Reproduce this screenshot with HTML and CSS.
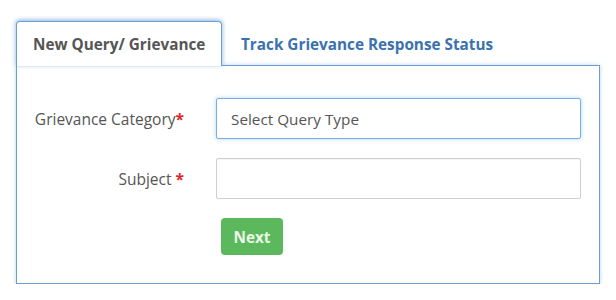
FILE: index.html
```html
<!DOCTYPE html>
<html lang="en">
<head>
  <meta charset="UTF-8">
  <meta name="viewport" content="width=device-width, initial-scale=1.0">
  <title> Grievance </title>
  <link rel="stylesheet" href="styles.css">
</head>
<body>
  <div class="container">
    <!-- Tabs -->
    <div class="tabs">
      <div class="tab active">New Query/ Grievance</div>
      <div class="tab"><a href="#">Track Grievance Response Status</a></div>
    </div>

    <!-- Tab Panel -->
    <div class="tab-panel">
      <form class="query-form">
        <label class="form-label" for="query-type">Grievance Category<span class="req">*</span></label>
        <div class="form-field">
          <select id="query-type" class="form-control focused">
            <option>Select Query Type</option>
          </select>
        </div>

        <label class="form-label" for="subject">Subject <span class="req">*</span></label>
        <div class="form-field">
          <input type="text" id="subject" class="form-control">
        </div>

        <div></div>
        <div class="form-field">
          <button type="button" class="btn-next">Next</button>
        </div>
      </form>
    </div>
  </div>
</body>
</html>
```

FILE: styles.css
```css
* {
  margin: 0;
  padding: 0;
  box-sizing: border-box;
  font-family: 'Open Sans', 'Liberation Sans', sans-serif;
}

body {
  background-color: white;
}

.container {
  padding: 21px 0 0 16px;
  width: 600px;
}

.tabs {
  display: flex;
  align-items: flex-end;
  position: relative;
  z-index: 1;
  margin-bottom: -1px;
}

.tab {
  height: 45px;
  display: flex;
  align-items: center;
  font-size: 15.3px;
  font-weight: 700;
  white-space: nowrap;
  padding: 0 19px;
}

.tab a {
  color: #3a72b0;
  text-decoration: none;
}

.tab.active {
  width: 206px;
  padding: 0 0 0 16px;
  color: #555;
  background-color: white;
  border: 1px solid #6a9fd6;
  border-bottom: none;
  border-radius: 4px 4px 0 0;
  box-shadow: -1px -1px 4px rgba(106, 159, 214, 0.45), 1px -1px 4px rgba(106, 159, 214, 0.45);
}

.tab-panel {
  width: 584px;
  height: 219px;
  border: 1px solid #6a9fd6;
  box-shadow: 0 0 4px rgba(106, 159, 214, 0.45);
  padding-top: 32px;
}

.query-form {
  display: grid;
  grid-template-columns: 167px 365px;
  column-gap: 32px;
  row-gap: 19px;
  align-items: center;
}

.form-label {
  text-align: right;
  font-size: 15.5px;
  color: #555;
}

.req {
  color: #e0252b;
  font-weight: 700;
}

.form-control {
  width: 365px;
  height: 41px;
  border: 1px solid #cfcfcf;
  border-radius: 2px;
  background: white;
  font-size: 15.3px;
  color: #555;
  padding: 0 14px;
  outline: none;
  box-shadow: inset 0 1px 1px rgba(0, 0, 0, 0.05);
}

select.form-control {
  appearance: none;
  -webkit-appearance: none;
}

.form-control.focused {
  border-color: #79aee0;
  box-shadow: 0 0 4px rgba(102, 175, 233, 0.5);
}

.btn-next {
  margin-left: 5px;
  width: 62px;
  height: 37px;
  border: none;
  border-radius: 4px;
  background-color: #5cb85c;
  color: #eaf8e6;
  font-size: 15.3px;
  font-weight: 700;
  cursor: pointer;
}
```
